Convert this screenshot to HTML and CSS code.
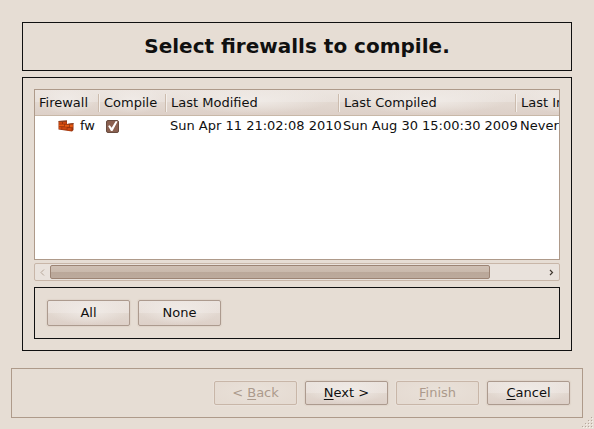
FILE: index.html
```html
<!DOCTYPE html>
<html lang="en">
<head>
<meta charset="utf-8">
<title>Select firewalls to compile</title>
<link rel="stylesheet" href="styles.css">
</head>
<body>
<main class="page">
  <header class="frame title-frame">
    <h1 class="title">Select firewalls to compile.</h1>
  </header>
  <section class="frame list-frame">
    <div class="list-view">
      <table class="list">
        <colgroup>
          <col class="col-firewall">
          <col class="col-compile">
          <col class="col-modified">
          <col class="col-compiled">
          <col class="col-installed">
        </colgroup>
        <thead>
          <tr>
            <th scope="col">Firewall</th>
            <th scope="col">Compile</th>
            <th scope="col">Last Modified</th>
            <th scope="col">Last Compiled</th>
            <th scope="col">Last Installed</th>
          </tr>
        </thead>
        <tbody>
          <tr>
            <td>
              <label class="name" for="compile-fw">
                <svg class="wall" width="16" height="12" viewBox="0 0 16 12" aria-hidden="true">
                  <path d="M0.500 1 L9 .5 V4 L15.500 3 V10 L14 11.500 L0.500 9.500Z" fill="#98330c"/>
                  <path d="M1 2h3v1.800H1zM5 2h3.500v1.800H5zM1 7h2.500v2H1zM4.200 7.300h4.500v2.200H4.200zM9.500 8h4v2.500h-4z" fill="#cf4810"/>
                  <path d="M1 4.500h5v1.800H1zM6.700 4.800h4.500v2H6.700zM12 4.500h2.800v2.800H12z" fill="#e85a10"/>
                  <path d="M.5 1 L9 .5 V1.500 L1 2ZM9 4 L15.500 3 V4 L9 4.800Z" fill="#8a4426"/>
                </svg>
                fw
              </label>
            </td>
            <td><input class="check" type="checkbox" id="compile-fw" checked></td>
            <td>Sun Apr 11 21:02:08 2010</td>
            <td>Sun Aug 30 15:00:30 2009</td>
            <td>Never</td>
          </tr>
        </tbody>
      </table>
    </div>
    <div class="scrollbar">
      <button class="arrow arrow-off" type="button" aria-label="Scroll left" disabled>
        <svg width="5" height="7" viewBox="0 0 5 7"><path d="M4 .5 1 3.500 4 6.500" fill="none" stroke="currentColor"/></svg>
      </button>
      <div class="track"><div class="thumb"></div></div>
      <button class="arrow" type="button" aria-label="Scroll right">
        <svg width="5" height="7" viewBox="0 0 5 7"><path d="M1 1 3.500 3.500 1 6" fill="none" stroke="currentColor" stroke-width="1.200"/></svg>
      </button>
    </div>
    <div class="frame select-frame">
      <button class="btn btn-tall" type="button">All</button>
      <button class="btn btn-tall" type="button">None</button>
    </div>
  </section>
  <footer class="wizard-bar">
    <button class="btn" type="button" disabled>&lt; <u>B</u>ack</button>
    <button class="btn" type="button"><u>N</u>ext &gt;</button>
    <button class="btn" type="button" disabled><u>F</u>inish</button>
    <button class="btn" type="button"><u>C</u>ancel</button>
  </footer>
</main>
<svg class="grip" width="12" height="12" viewBox="0 0 12 12" aria-hidden="true">
  <path d="M9 0h1v1h-1zM6 3h1v1h-1zM9 3h1v1h-1zM3 6h1v1h-1zM6 6h1v1h-1zM9 6h1v1h-1zM0 9h1v1h-1zM3 9h1v1h-1zM6 9h1v1h-1zM9 9h1v1h-1z" fill="#b5a69a"/>
  <path d="M10 1h1v1h-1zM7 4h1v1h-1zM10 4h1v1h-1zM4 7h1v1h-1zM7 7h1v1h-1zM10 7h1v1h-1zM1 10h1v1h-1zM4 10h1v1h-1zM7 10h1v1h-1zM10 10h1v1h-1z" fill="#f5f0ec"/>
</svg>
</body>
</html>
```

FILE: styles.css
```css
* {
  box-sizing: border-box;
}

body {
  margin: 0;
  background: #e6ddd4;
  color: #101010;
  font: 13px/16px "DejaVu Sans", sans-serif;
}

.page {
  display: flex;
  flex-direction: column;
  min-height: 100vh;
  padding: 22px 11px 11px;
}

.frame {
  border: 1px solid #101010;
}

.title-frame {
  margin: 0 11px 6px;
  padding: 11px;
}

.title {
  margin: 0;
  font-size: 20px;
  line-height: 25px;
  text-align: center;
}

.list-frame {
  display: flex;
  flex: 1;
  flex-direction: column;
  margin: 0 11px 17px;
  padding: 11px;
}

.list-view {
  flex: 1;
  overflow: hidden;
  border: 1px solid #ae9a8a;
  background: #fff;
}

.list {
  width: 600px;
  table-layout: fixed;
  border-collapse: separate;
  border-spacing: 0;
  white-space: nowrap;
}

.col-firewall {
  width: 64px;
}

.col-compile {
  width: 67px;
}

.col-modified {
  width: 173px;
}

.col-compiled {
  width: 177px;
}

.list th {
  height: 26px;
  padding: 0 4px;
  border-bottom: 1px solid #c8b8a8;
  background:
    linear-gradient(#ccbcae, #ccbcae) right 4px / 1px 18px no-repeat,
    radial-gradient(ellipse at 50% 40%, #f0ebe7 0%, transparent 65%),
    linear-gradient(#ece5e0, #e8e0da 50%, #e2d8d0 50%, #ddd0c8);
  font-weight: normal;
  text-align: left;
}

.list th + th {
  padding-left: 5px;
  background:
    linear-gradient(#f4efeb, #f4efeb) left 4px / 1px 18px no-repeat,
    linear-gradient(#ccbcae, #ccbcae) right 4px / 1px 18px no-repeat,
    radial-gradient(ellipse at 50% 40%, #f0ebe7 0%, transparent 65%),
    linear-gradient(#ece5e0, #e8e0da 50%, #e2d8d0 50%, #ddd0c8);
}

.list td {
  height: 20px;
  padding: 0 4px;
}

.name {
  display: flex;
  align-items: center;
  gap: 6px;
  padding-left: 19px;
}

.wall {
  flex: none;
}

.check {
  display: block;
  width: 13px;
  height: 13px;
  margin: 0 3px;
  appearance: none;
  border: 1px solid #684c40;
  border-radius: 2px;
  background: #8a6050;
}

.check:checked::before {
  content: "";
  display: block;
  width: 11px;
  height: 11px;
  background: #fff;
  clip-path: polygon(10% 50%, 25% 43%, 42% 65%, 80% 4%, 96% 8%, 50% 96%, 36% 96%);
}

.scrollbar {
  display: grid;
  grid-template-columns: 15px 1fr 15px;
  height: 18px;
  margin: 3px 0 6px;
  border: 1px solid #c8b6a8;
  border-radius: 2px;
  background: #e9e2dc;
}

.arrow {
  display: flex;
  align-items: center;
  justify-content: center;
  padding: 0;
  border: 0;
  background: none;
  color: #403830;
}

.arrow-off {
  color: #b5a597;
}

.track {
  padding: 1px 0;
}

.thumb {
  width: 89%;
  height: 14px;
  border: 1px solid #9c8474;
  border-radius: 2px;
  background: linear-gradient(#cfc0b4, #c9b9ac 50%, #baa799 50%, #bcaa9d);
}

.select-frame {
  display: flex;
  gap: 8px;
  padding: 12px;
}

.wizard-bar {
  display: flex;
  justify-content: flex-end;
  gap: 8px;
  padding: 12px;
  border: 1px solid #ae9a8a;
}

.btn {
  width: 83px;
  height: 24px;
  padding: 0;
  border: 1px solid #ac9a8e;
  border-radius: 2px;
  background:
    radial-gradient(ellipse at 50% 40%, #f0ebe7 0%, transparent 70%),
    linear-gradient(#ebe4df, #e9e0da 50%, #e2d8d0 50%, #ddd0c8);
  box-shadow: 0 0 1px 1px #dfd4ca;
  color: inherit;
  font: inherit;
}

.btn-tall {
  height: 26px;
}

.btn u {
  text-underline-offset: 2px;
}

.btn:disabled {
  border-color: #c8b6a8;
  background: radial-gradient(ellipse at 50% 40%, #e9e1d9 0%, #e5dbd2 80%);
  box-shadow: 0 0 1px 1px #e9e1da;
  color: #ac9a8c;
}

.grip {
  position: absolute;
  right: 0;
  bottom: 0;
}
```
